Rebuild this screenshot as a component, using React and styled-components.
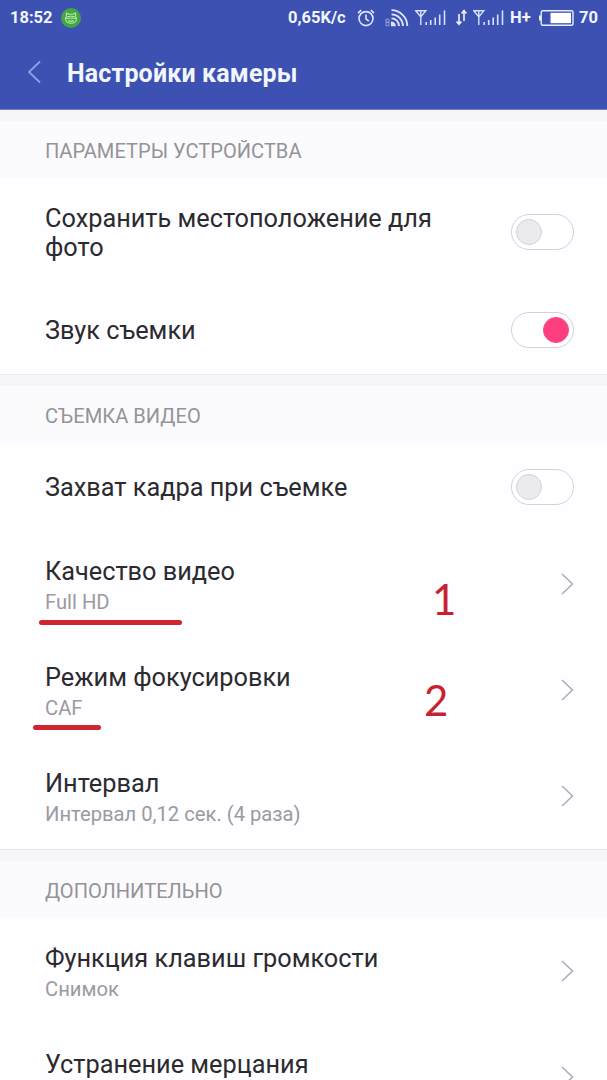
import { useState } from "react";
import styled, { createGlobalStyle } from "styled-components";

const GlobalStyle = createGlobalStyle`
  * {
    box-sizing: border-box;
  }
  body {
    margin: 0;
    background: #fefdff;
    font-family: Roboto, "Noto Sans", sans-serif;
  }
`;

const Screen = styled.div`
  width: 607px;
  height: 1080px;
  overflow: hidden;
  color: #2b2a2e;
`;

const TopBar = styled.header`
  height: 110px;
  background: #3d51b3;
  border-bottom: 1px solid #7381c4;
  color: #f1f6ff;
`;

const StatusBar = styled.div`
  display: flex;
  align-items: center;
  height: 35px;
  padding: 0 9px 0 10px;
  font-size: 16.5px;
  font-weight: 700;
  line-height: 20px;
`;

const Clock = styled.span`
  width: 43px;
  white-space: nowrap;
`;

const AppBadge = styled.span`
  display: flex;
  width: 20px;
  height: 20px;
  margin-left: 8px;
  border-radius: 50%;
  background: #43a548;
`;

const StatusRight = styled.div`
  display: flex;
  align-items: center;
  margin-left: auto;
  white-space: nowrap;

  svg {
    display: block;
    flex: none;
  }
`;

const StatusText = styled.span`
  width: ${(p) => p.$width}px;
`;

const StatusIcons = styled.div`
  display: flex;
  align-items: center;
  gap: ${(p) => p.$gap}px;
  margin: 0 ${(p) => p.$right}px 0 ${(p) => p.$left}px;
`;

const TitleBar = styled.div`
  display: flex;
  align-items: center;
  height: 74px;
  padding-left: 27px;
`;

const BackButton = styled.button`
  display: flex;
  width: 40px;
  padding: 0;
  border: 0;
  background: none;
`;

const PageTitle = styled.h1`
  margin: 0;
  padding-top: 3px;
  font-size: 25px;
  font-weight: 700;
  line-height: 30px;
  letter-spacing: 0.15px;
  white-space: nowrap;
`;

const Section = styled.section`
  border-bottom: 1px solid #e9e8ec;
`;

const SectionTitle = styled.h2`
  display: flex;
  align-items: center;
  height: 68px;
  margin: 0;
  padding: 3px 0 0 45px;
  border-top: 11px solid #f6f5f9;
  background: #fbfafd;
  color: #949398;
  font-size: 20.1px;
  font-weight: 400;
  line-height: 24px;
`;

const Row = styled.div`
  position: relative;
  display: flex;
  align-items: center;
  justify-content: space-between;
  height: ${(p) => p.$height}px;
  padding: 0 33px 0 45px;
`;

const RowText = styled.div`
  width: 410px;
  min-height: ${(p) => (p.$tall ? 60 : 0)}px;
  padding-top: ${(p) => (p.$tall ? 3 : 1)}px;
`;

const RowTitle = styled.div`
  font-size: 25.3px;
  line-height: 29px;
`;

const RowValue = styled.div`
  margin-top: 4px;
  color: #9b9a9f;
  font-size: 20.2px;
  line-height: 24px;
`;

const Track = styled.button`
  display: flex;
  align-items: center;
  justify-content: ${(p) => (p.$on ? "flex-end" : "flex-start")};
  width: 63px;
  height: 36px;
  padding: 0 4px;
  border: 1px solid #d4d1d8;
  border-radius: 18px;
  background: #fff;
`;

const Knob = styled.span`
  width: 26px;
  height: 26px;
  border: 1px solid ${(p) => (p.$on ? "#fd4383" : "#d3d1d6")};
  border-radius: 50%;
  background: ${(p) => (p.$on ? "#fd3f80" : "#ebeaed")};
`;

// hand-made marks drawn over the rows
const Underline = styled.span`
  position: absolute;
  left: ${(p) => p.$left}px;
  top: ${(p) => p.$top}px;
  width: ${(p) => p.$width}px;
  height: 5px;
  border-radius: 3px;
  background: #cf2531;
`;

const StepNumber = styled.span`
  position: absolute;
  left: ${(p) => p.$left}px;
  top: ${(p) => p.$top}px;
  color: #c9222f;
  font-family: Lato, "Open Sans", sans-serif;
  font-size: 42px;
  line-height: 50px;
`;

function Switch({ initial = false }) {
  const [on, setOn] = useState(initial);
  return (
    <Track type="button" role="switch" aria-checked={on} $on={on} onClick={() => setOn(!on)}>
      <Knob $on={on} />
    </Track>
  );
}

function Chevron() {
  return (
    <svg width="13" height="22" viewBox="0 0 13 22" fill="none" stroke="#adabb3" strokeWidth="1.5">
      <path d="M1 1 11.5 11 1 21" />
    </svg>
  );
}

function SignalIcon() {
  return (
    <svg width="31" height="18" viewBox="0 0 31 18" fill="none" stroke="#d5e2ff" strokeWidth="1.4">
      <path d="M0.8 1.8H10.8L5.8 8Z M5.8 1.8V16" />
      <path d="M11.2 13V16 M15.7 11V16 M20.2 8.5V16 M24.7 5.5V16 M29.5 1.5V16" strokeWidth="1.6" />
    </svg>
  );
}

function AlarmIcon() {
  return (
    <svg width="18" height="18" viewBox="0 0 18 18" fill="none" stroke="#dce7ff" strokeWidth="1.6">
      <circle cx="9" cy="9.6" r="7" />
      <path d="M9 5.5V9.8L11.8 12.2 M1 4.2 4.2 1.2 M13.8 1.2 17 4.2" />
    </svg>
  );
}

function HotspotIcon() {
  return (
    <svg width="24" height="18" viewBox="0 0 24 18" fill="none" stroke="#dce7ff" strokeWidth="1.8">
      <path d="M6.5 1.2A16 16 0 0 1 22.3 17 M6.5 5.4A11.6 11.6 0 0 1 18 17 M6.5 9.4A7.5 7.5 0 0 1 14 17" />
      <path d="M6 12.4A4.8 4.8 0 0 1 10.8 17.2H6Z" fill="#dce7ff" stroke="none" />
      <path d="M1 10.2H4V13.3H1ZM1 13.3H4V16.7H1Z" stroke="#8f9fdd" strokeWidth="1" />
    </svg>
  );
}

function TrafficIcon() {
  return (
    <svg width="11" height="17" viewBox="0 0 11 17" fill="none" stroke="#edf3ff" strokeWidth="1.6">
      <path d="M3 5V15 M0.6 12.4 3 15.2 5.4 12.4 M8 12V2 M5.6 4.6 8 1.6 10.4 4.6" />
    </svg>
  );
}

function BatteryIcon() {
  return (
    <svg width="35" height="16" viewBox="0 0 35 16" fill="none">
      <rect x="2.2" y="0.8" width="31.8" height="14.4" rx="1.5" stroke="#e6eeff" strokeWidth="1.4" />
      <path d="M0 5.5H2V10.5H0Z" fill="#e6eeff" />
      <path d="M11.5 2.8H32V13.2H11.5Z" fill="#fff" />
    </svg>
  );
}

function CatIcon() {
  return (
    <svg width="20" height="20" viewBox="0 0 20 20" fill="none" stroke="#b9ef9f" strokeWidth="1.1">
      <path d="M5.2 8.5 5.6 5 8 6.2H12L14.4 5 14.8 8.5" />
      <path d="M4.5 10.2C4.5 7.5 15.5 7.5 15.5 10.2 15.5 17 4.5 17 4.5 10.2Z M4.5 10.3H15.5 M7 12.7 8.4 13.1H11.6L13 12.7" />
      <path d="M7.5 8.8H8.5 M11.5 8.8H12.5" />
    </svg>
  );
}

function App() {
  return (
    <>
      <GlobalStyle />
      <Screen>
        <TopBar>
          <StatusBar>
            <Clock>18:52</Clock>
            <AppBadge>
              <CatIcon />
            </AppBadge>
            <StatusRight>
              <StatusText $width={58}>0,65K/c</StatusText>
              <StatusIcons $gap={10} $left={11} $right={6}>
                <AlarmIcon />
                <HotspotIcon />
              </StatusIcons>
              <SignalIcon />
              <StatusIcons $gap={6} $left={10} $right={6}>
                <TrafficIcon />
                <SignalIcon />
              </StatusIcons>
              <StatusText $width={21}>H+</StatusText>
              <StatusIcons $left={8} $right={5}>
                <BatteryIcon />
              </StatusIcons>
              <StatusText $width={19}>70</StatusText>
            </StatusRight>
          </StatusBar>
          <TitleBar>
            <BackButton type="button" aria-label="Назад">
              <svg width="14" height="24" viewBox="0 0 14 24" fill="none" stroke="#929fe6" strokeWidth="1.8">
                <path d="M13 1.5 2 12 13 22.5" />
              </svg>
            </BackButton>
            <PageTitle>Настройки камеры</PageTitle>
          </TitleBar>
        </TopBar>

        <Section>
          <SectionTitle>ПАРАМЕТРЫ УСТРОЙСТВА</SectionTitle>
          <Row $height={108}>
            <RowText>
              <RowTitle>Сохранить местоположение для фото</RowTitle>
            </RowText>
            <Switch />
          </Row>
          <Row $height={88}>
            <RowText>
              <RowTitle>Звук съемки</RowTitle>
            </RowText>
            <Switch initial />
          </Row>
        </Section>

        <Section>
          <SectionTitle>СЪЕМКА ВИДЕО</SectionTitle>
          <Row $height={88}>
            <RowText>
              <RowTitle>Захват кадра при съемке</RowTitle>
            </RowText>
            <Switch />
          </Row>
          <Row $height={106}>
            <RowText $tall>
              <RowTitle>Качество видео</RowTitle>
              <RowValue>Full HD</RowValue>
            </RowText>
            <Chevron />
            <Underline $left={39} $top={89} $width={143} />
            <StepNumber $left={432} $top={43}>1</StepNumber>
          </Row>
          <Row $height={106}>
            <RowText $tall>
              <RowTitle>Режим фокусировки</RowTitle>
              <RowValue>CAF</RowValue>
            </RowText>
            <Chevron />
            <Underline $left={33} $top={88} $width={68} />
            <StepNumber $left={424} $top={38}>2</StepNumber>
          </Row>
          <Row $height={106}>
            <RowText $tall>
              <RowTitle>Интервал</RowTitle>
              <RowValue>Интервал 0,12 сек. (4 раза)</RowValue>
            </RowText>
            <Chevron />
          </Row>
        </Section>

        <Section>
          <SectionTitle>ДОПОЛНИТЕЛЬНО</SectionTitle>
          <Row $height={106}>
            <RowText $tall>
              <RowTitle>Функция клавиш громкости</RowTitle>
              <RowValue>Снимок</RowValue>
            </RowText>
            <Chevron />
          </Row>
          <Row $height={106}>
            <RowText $tall>
              <RowTitle>Устранение мерцания</RowTitle>
            </RowText>
            <Chevron />
          </Row>
        </Section>
      </Screen>
    </>
  );
}

export default App;
